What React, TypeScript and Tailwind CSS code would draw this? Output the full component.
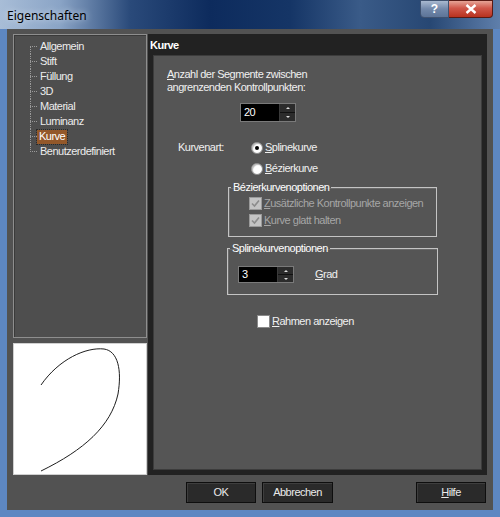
import React from "react";

const FONT = { fontFamily: '"Liberation Sans", Arial, sans-serif' };

const TREE = ["Allgemein", "Stift", "Füllung", "3D", "Material", "Luminanz", "Kurve", "Benutzerdefiniert"];

function U({ c }: { c: string }) {
  return <span className="underline underline-offset-[1px]">{c}</span>;
}

function Spin({ value, h }: { value: string; h: string }) {
  return (
    <div className={`flex w-[56px] ${h} border border-[#7a7a7a] bg-black`}>
      <div className="flex-1 pl-[3px] flex items-center text-white text-[11px]">{value}</div>
      <div className="w-[16px] flex flex-col border-l border-[#3a3a3a]">
        <div className="flex-1 bg-[#2c2c2c] border-b border-[#111] flex items-center justify-center">
          <div className="w-0 h-0 border-l-[2px] border-r-[2px] border-b-[2px] border-l-transparent border-r-transparent border-b-[#dcdcdc]" />
        </div>
        <div className="flex-1 bg-[#2c2c2c] flex items-center justify-center">
          <div className="w-0 h-0 border-l-[2px] border-r-[2px] border-t-[2px] border-l-transparent border-r-transparent border-t-[#dcdcdc]" />
        </div>
      </div>
    </div>
  );
}

function Radio({ checked }: { checked?: boolean }) {
  return (
    <div className="w-[12px] h-[12px] rounded-full bg-white border border-[#8a8a8a] flex items-center justify-center shadow-[inset_1px_1px_1px_#bbb]">
      {checked && <div className="w-[4px] h-[4px] rounded-full bg-black" />}
    </div>
  );
}

function Check({ checked, disabled }: { checked?: boolean; disabled?: boolean }) {
  return (
    <div
      className={`w-[13px] h-[13px] border flex items-center justify-center ${
        disabled ? "bg-[#c4c4c4] border-[#9a9a9a]" : "bg-white border-[#8a8a8a]"
      }`}
    >
      {checked && (
        <svg width="9" height="9" viewBox="0 0 9 9">
          <path d="M1 4.5 L3.5 7 L8 1.5" fill="none" stroke={disabled ? "#8c8c8c" : "#222"} strokeWidth="1.6" />
        </svg>
      )}
    </div>
  );
}

function Btn({ children, w }: { children: React.ReactNode; w: string }) {
  return (
    <div
      className={`${w} h-[21px] bg-[#2a2a2a] border border-[#0e0e0e] shadow-[inset_1px_1px_0_#3e3e3e] flex items-center justify-center text-[11px] text-[#eaeaea]`}
    >
      {children}
    </div>
  );
}

export default function App() {
  return (
    <div
      className="w-[500px] h-[517px] flex flex-col bg-[#5d87c2] tracking-[-0.5px] select-none"
      style={FONT}
    >
      {/* Title bar */}
      <div className="h-[29px] flex items-start justify-between pl-[7px] pr-[7px] bg-[linear-gradient(to_right,#a8bdd7_0%,#8aa4c6_12%,#2a4a7a_26%,#0d2b5d_42%,#153566_58%,#3a5b88_72%,#274773_86%,#5f7fab_100%)]">
        <div
          className="mt-[7px] text-[12px] tracking-normal text-black [text-shadow:0_0_6px_#dfe8f3]"
          style={{ fontFamily: '"Noto Sans", "Open Sans", sans-serif' }}
        >
          Eigenschaften
        </div>
        <div className="flex h-[18px]">
          <div className="w-[29px] h-full rounded-bl-[4px] border border-[#3f5270] bg-[linear-gradient(#a9b9d0,#7288aa_50%,#5d7498)] flex items-center justify-center text-white text-[12px] font-bold tracking-normal">
            ?
          </div>
          <div className="w-[44px] h-full rounded-br-[4px] border border-l-0 border-[#5a1a14] bg-[linear-gradient(#e6a496,#d0574a_45%,#b8321f)] flex items-center justify-center">
            <svg width="12" height="10" viewBox="0 0 12 10">
              <path d="M1.5 1 L10.5 9 M10.5 1 L1.5 9" stroke="#fff" strokeWidth="2.4" />
            </svg>
          </div>
        </div>
      </div>

      {/* Client */}
      <div className="flex-1 mx-[7px] mb-[7px] bg-[#525252] flex flex-col pt-[5px] pl-[6px] pr-[6px]">
        <div className="flex gap-[1px]">
          {/* Left column */}
          <div className="w-[134px] flex flex-col gap-[5px]">
            <div className="h-[304px] border border-[#8e8e8e] bg-[#4e4e4e] shadow-[inset_1px_1px_0_#3a3a3a] pt-[4px] pl-[16px]">
              {TREE.map((t, i) => (
                <div key={t} className="h-[15px] flex items-center">
                  <div className="relative w-[7px] h-full">
                    <div
                      className={`absolute left-0 w-0 border-l border-dotted border-[#9a9a9a] ${
                        i === 0 ? "top-[7px] bottom-0" : i === TREE.length - 1 ? "top-0 h-[8px]" : "top-0 bottom-0"
                      }`}
                    />
                    <div className="absolute left-0 top-[7px] w-[7px] border-t border-dotted border-[#9a9a9a]" />
                  </div>
                  {t === "Kurve" ? (
                    <div className="h-[14px] px-[2px] flex items-center bg-[#93582a] outline-1 outline-dotted outline-[#2a2a2a] text-[11px] text-white">
                      {t}
                    </div>
                  ) : (
                    <div className="px-[3px] text-[11px] text-[#ececec]">{t}</div>
                  )}
                </div>
              ))}
            </div>
            <div className="h-[132px] bg-white border border-[#d0d0d0]">
              <svg width="132" height="130" viewBox="0 0 132 130">
                <path
                  d="M27 41 C45 15 72 3 90 5 C104 7 108 26 104 50 C97 82 70 106 27 127"
                  fill="none"
                  stroke="#1e1e1e"
                  strokeWidth="1"
                />
              </svg>
            </div>
          </div>

          {/* Right panel */}
          <div className="w-[339px] h-[441px] bg-[#222222] flex flex-col">
            <div className="h-[21px] pl-[2px] pt-[3px] text-[11px] font-bold text-white">Kurve</div>
            <div className="flex-1 mx-[5px] mb-[5px] bg-[#555555] border border-[#3c3c3c] flex flex-col items-start text-[11px] text-[#f0f0f0]">
              <div className="mt-[12px] ml-[13px] leading-[13px]">
                <U c="A" />nzahl der Segmente zwischen
                <br />
                angrenzenden Kontrollpunkten:
              </div>
              <div className="mt-[9px] ml-[86px]">
                <Spin value="20" h="h-[19px]" />
              </div>
              <div className="mt-[19px] ml-[24px] flex items-center h-[13px]">
                <div className="w-[73px]">Kurvenart:</div>
                <Radio checked />
                <div className="ml-[2px]">
                  <U c="S" />plinekurve
                </div>
              </div>
              <div className="mt-[8px] ml-[97px] flex items-center h-[13px]">
                <Radio />
                <div className="ml-[2px]">
                  <U c="B" />ézierkurve
                </div>
              </div>

              <fieldset className="mt-[6px] ml-[74px] w-[209px] border border-[#c4c4c4] shadow-[inset_1px_1px_0_#6a6a6a] pb-[9px]">
                <legend className="ml-[2px] px-[2px] leading-[13px] text-white">Bézierkurvenoptionen</legend>
                <div className="mt-[3px] ml-[20px] flex items-center h-[13px] text-[#a6a6a6]">
                  <Check checked disabled />
                  <div className="ml-[2px]">
                    <U c="Z" />usätzliche Kontrollpunkte anzeigen
                  </div>
                </div>
                <div className="mt-[4px] ml-[20px] flex items-center h-[13px] text-[#a6a6a6]">
                  <Check checked disabled />
                  <div className="ml-[2px]">
                    <U c="K" />urve glatt halten
                  </div>
                </div>
              </fieldset>

              <fieldset className="mt-[5px] ml-[73px] w-[211px] border border-[#c4c4c4] shadow-[inset_1px_1px_0_#6a6a6a] pb-[11px]">
                <legend className="ml-[2px] px-[2px] leading-[13px] text-white">Splinekurvenoptionen</legend>
                <div className="mt-[11px] ml-[10px] flex items-center">
                  <Spin value="3" h="h-[17px]" />
                  <div className="ml-[21px]">
                    <U c="G" />rad
                  </div>
                </div>
              </fieldset>

              <div className="mt-[20px] ml-[103px] flex items-center h-[13px]">
                <Check />
                <div className="ml-[2px]">
                  <U c="R" />ahmen anzeigen
                </div>
              </div>
            </div>
          </div>
        </div>

        {/* Buttons */}
        <div className="mt-[7px] flex pl-[173px] pr-[1px]">
          <Btn w="w-[70px]">OK</Btn>
          <div className="ml-[6px]">
            <Btn w="w-[71px]">Abbrechen</Btn>
          </div>
          <div className="ml-auto">
            <Btn w="w-[70px]">
              <U c="H" />ilfe
            </Btn>
          </div>
        </div>
      </div>
    </div>
  );
}
